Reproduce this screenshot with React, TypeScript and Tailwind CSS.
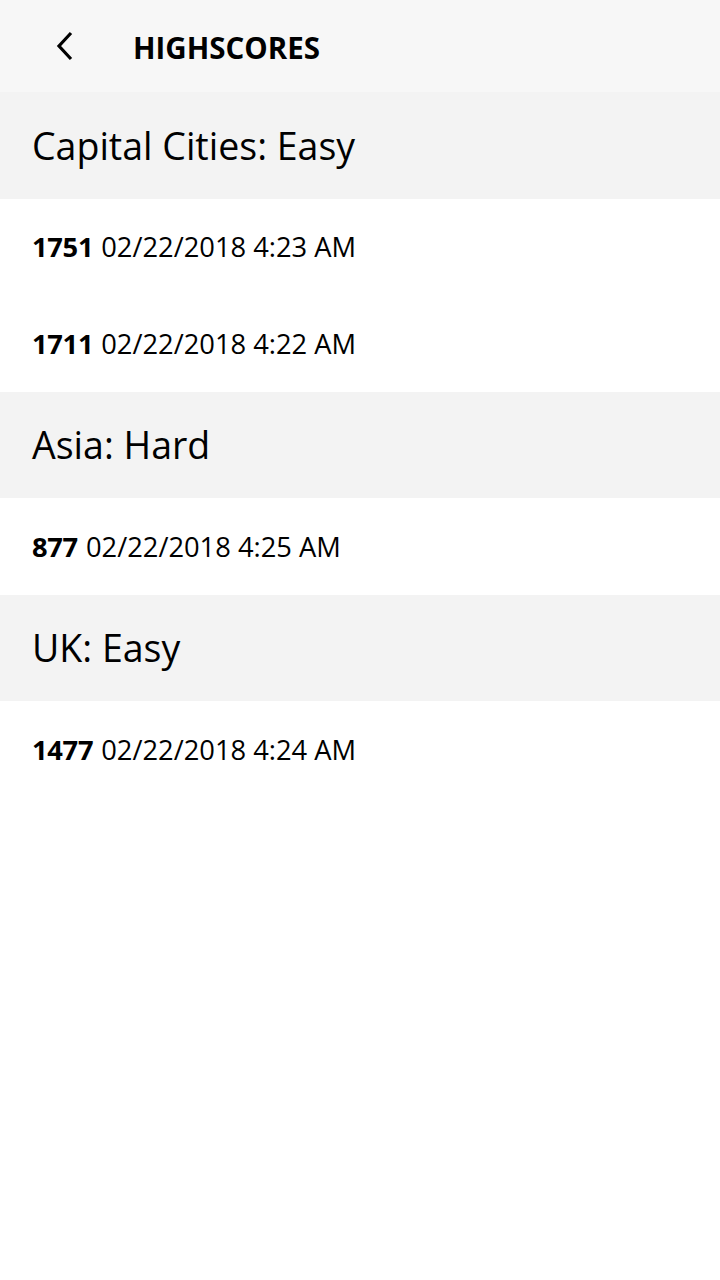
const groups = [
  {
    title: "Capital Cities: Easy",
    scores: [
      { score: 1751, date: "02/22/2018 4:23 AM" },
      { score: 1711, date: "02/22/2018 4:22 AM" },
    ],
  },
  { title: "Asia: Hard", scores: [{ score: 877, date: "02/22/2018 4:25 AM" }] },
  { title: "UK: Easy", scores: [{ score: 1477, date: "02/22/2018 4:24 AM" }] },
];

export default function App() {
  return (
    <div className="min-h-[1280px] bg-white text-black font-['Open_Sans',sans-serif]">
      <header className="h-[92px] bg-[#f7f7f7] flex items-center">
        <button className="w-[133px] h-full flex items-center pl-[54px]" type="button">
          <svg width="20" height="30" viewBox="0 0 20 30" fill="none">
            <path d="M17 2 L5 15 L17 28" stroke="#000" strokeWidth="3.2" />
          </svg>
        </button>
        <h1 className="text-[29.5px] font-bold leading-none pt-[3px]">HIGHSCORES</h1>
      </header>

      {groups.map((group) => (
        <section key={group.title}>
          <div className="h-[106.5px] bg-[#f3f3f3] flex items-center px-8">
            <h2 className="text-[37.5px] leading-none">{group.title}</h2>
          </div>
          {group.scores.map((s) => (
            <div className="h-[96.5px] flex items-center px-8 text-[27.3px] leading-none" key={s.score}>
              <span className="font-bold tracking-[-0.3px]">{s.score}</span>
              <span className="ml-[8px]">{s.date}</span>
            </div>
          ))}
        </section>
      ))}
    </div>
  );
}
